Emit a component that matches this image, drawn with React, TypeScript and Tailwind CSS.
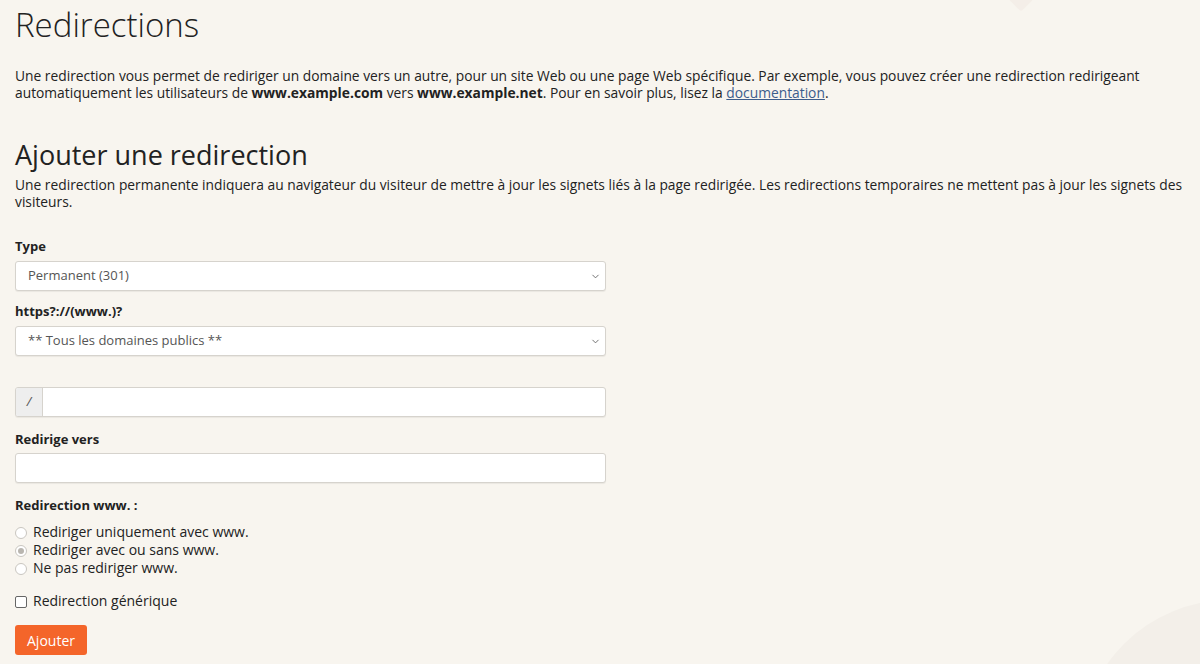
import { ChevronDown } from "lucide-react";

const font = { fontFamily: '"Open Sans", "Liberation Sans", sans-serif' };

function Select({ value }: { value: string }) {
  return (
    <div className="relative h-[30px] w-[591px] rounded-[3px] border border-[#d6d3cd] bg-white shadow-[0_1px_1px_rgba(0,0,0,0.06)]">
      <div className="flex h-full items-center pl-[12px] text-[13px] text-[#555]">{value}</div>
      <ChevronDown className="absolute right-[4px] top-[9px] h-[11px] w-[11px] text-[#666]" strokeWidth={2} />
    </div>
  );
}

function Radio({ label, checked }: { label: string; checked?: boolean }) {
  return (
    <label className="flex h-[18px] items-center gap-[6px] text-[14px] text-[#222]">
      <span className="mt-[4px] flex h-[12px] w-[12px] items-center justify-center rounded-full border border-[#c9c6c0] bg-white">
        {checked && <span className="h-[6px] w-[6px] rounded-full bg-[#b9b6b0]" />}
      </span>
      {label}
    </label>
  );
}

export default function App() {
  return (
    <div className="relative h-[664px] w-full overflow-hidden bg-[#f8f5ef] text-[#222]" style={font}>
      {/* decorative shapes */}
      <div className="absolute left-[1012px] top-[-10px] h-[18px] w-[18px] rotate-45 rounded-[3px] bg-[#f4eee8]" />
      <div className="absolute left-[1080px] top-[600px] h-[300px] w-[400px] rounded-full bg-[#f3efe9]" />

      <div className="relative px-[15px] pt-[3px]">
        <h1 className="text-[33px] font-light leading-[44px] text-[#222]">Redirections</h1>

        <p className="mt-[20px] text-[13.8px] leading-[17px]">
          Une redirection vous permet de rediriger un domaine vers un autre, pour un site Web ou une page Web spécifique. Par exemple, vous pouvez créer une redirection redirigeant automatiquement les utilisateurs de <b>www.example.com</b> vers <b>www.example.net</b>. Pour en savoir plus, lisez la{" "}
          <a className="text-[#3c5d8c] underline">documentation</a>.
        </p>

        <h2 className="mt-[36px] text-[27px] font-normal leading-[36px]">Ajouter une redirection</h2>
        <p className="mt-[3px] text-[13.8px] leading-[17px]">
          Une redirection permanente indiquera au navigateur du visiteur de mettre à jour les signets liés à la page redirigée. Les redirections temporaires ne mettent pas à jour les signets des visiteurs.
        </p>

        <div className="mt-[27px] flex flex-col">
          <div className="text-[13px] font-bold leading-[18px]">Type</div>
          <div className="mt-[6px]">
            <Select value="Permanent (301)" />
          </div>

          <div className="mt-[11px] text-[13px] font-bold leading-[18px]">https?://(www.)?</div>
          <div className="mt-[6px]">
            <Select value="** Tous les domaines publics **" />
          </div>

          <div className="mt-[31px] flex h-[30px] w-[591px] overflow-hidden rounded-[3px] border border-[#d6d3cd] bg-white shadow-[0_1px_1px_rgba(0,0,0,0.06)]">
            <div className="flex w-[27px] items-center justify-center border-r border-[#d6d3cd] bg-[#eeeeee] text-[13px] italic text-[#555]">/</div>
            <div className="flex-1" />
          </div>

          <div className="mt-[13px] text-[13px] font-bold leading-[18px]">Redirige vers</div>
          <div className="mt-[5px] h-[30px] w-[591px] rounded-[3px] border border-[#d6d3cd] bg-white shadow-[0_1px_1px_rgba(0,0,0,0.06)]" />

          <div className="mt-[13px] text-[13px] font-bold leading-[18px]">Redirection www. :</div>
          <div className="mt-[8px] flex flex-col">
            <Radio label="Rediriger uniquement avec www." />
            <Radio label="Rediriger avec ou sans www." checked />
            <Radio label="Ne pas rediriger www." />
          </div>

          <label className="mt-[15px] flex h-[18px] items-center gap-[6px] text-[14px]">
            <span className="mt-[3px] h-[12px] w-[12px] rounded-[2px] border border-[#666] bg-white" />
            Redirection générique
          </label>

          <button className="mt-[16px] h-[30px] w-[72px] rounded-[3px] bg-[#f4652a] text-[14px] text-white">Ajouter</button>
        </div>
      </div>
    </div>
  );
}
